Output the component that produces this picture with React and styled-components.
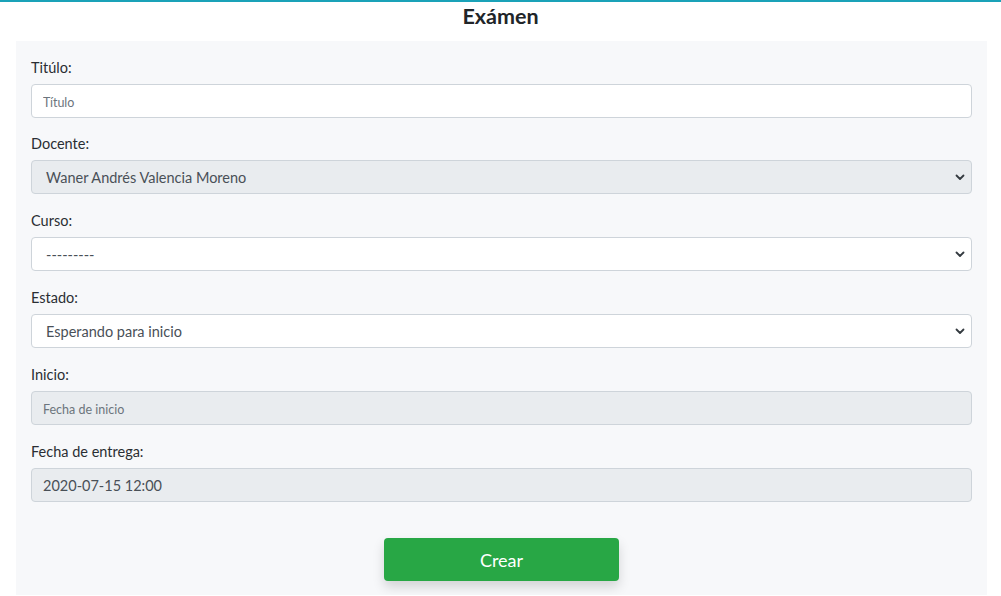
import React from "react";
import styled, { createGlobalStyle } from "styled-components";

const Global = createGlobalStyle`
  html, body { margin: 0; padding: 0; background: #fff; }
  body { font-family: "Segoe UI", Lato, "Open Sans", sans-serif; color: #212529; }
  * { box-sizing: border-box; }
`;

const Page = styled.div`
  border-top: 2px solid #1aa2b8;
  display: flex;
  flex-direction: column;
  align-items: stretch;
`;

const Title = styled.h1`
  margin: 0;
  height: 39px;
  font-size: 21.5px;
  font-weight: 700;
  line-height: 28px;
  text-align: center;
  color: #212529;
`;

const Panel = styled.form`
  margin: 0 14px 0 16px;
  background: #f7f8fa;
  padding: 16px 15px 14px 15px;
  display: flex;
  flex-direction: column;
`;

const Group = styled.div`
  display: flex;
  flex-direction: column;
  margin-bottom: ${(p) => (p.$first ? "15px" : "16px")};
`;

const Label = styled.label`
  font-size: 14.5px;
  line-height: 21px;
  margin-bottom: 6px;
  color: #2a2e33;
`;

const Input = styled.input`
  height: 34px;
  width: 100%;
  border: 1px solid #ced4da;
  border-radius: 4px;
  background: ${(p) => (p.readOnly ? "#e9ecef" : "#fff")};
  padding: 0 11px;
  font-family: inherit;
  font-size: 14.5px;
  color: #495057;
  outline: none;
  &::placeholder {
    font-size: 12.5px;
    color: #6c757d;
  }
`;

const SelectWrap = styled.div`
  position: relative;
  height: 34px;
  border: 1px solid #ced4da;
  border-radius: 4px;
  background: ${(p) => (p.$disabled ? "#e9ecef" : "#fff")};
  display: flex;
  align-items: center;
  padding: 0 14px;
  font-size: 14.5px;
  color: #495057;
`;

const Chevron = styled.svg`
  position: absolute;
  right: 6px;
  top: 50%;
  transform: translateY(-50%);
`;

const ButtonRow = styled.div`
  display: flex;
  justify-content: center;
  margin-top: 20px;
`;

const Button = styled.button`
  width: 235px;
  height: 43px;
  border: none;
  border-radius: 4px;
  background: #28a745;
  color: #fff;
  font-family: inherit;
  font-size: 18px;
  box-shadow: 0 6px 12px rgba(0, 0, 0, 0.15);
  cursor: pointer;
`;

const Select = ({ value, disabled }) => (
  <SelectWrap $disabled={disabled}>
    {value}
    <Chevron width="10" height="8" viewBox="0 0 10 8">
      <path d="M1.5 2.5l3.5 3.5 3.5-3.5" fill="none" stroke="#343a40" strokeWidth="1.8" strokeLinecap="round" strokeLinejoin="round" />
    </Chevron>
  </SelectWrap>
);

export default function App() {
  return (
    <Page>
      <Global />
      <Title>Exámen</Title>
      <Panel onSubmit={(e) => e.preventDefault()}>
        <Group $first>
          <Label>Titúlo:</Label>
          <Input placeholder="Título" />
        </Group>
        <Group>
          <Label>Docente:</Label>
          <Select value="Waner Andrés Valencia Moreno" disabled />
        </Group>
        <Group>
          <Label>Curso:</Label>
          <Select value="---------" />
        </Group>
        <Group>
          <Label>Estado:</Label>
          <Select value="Esperando para inicio" />
        </Group>
        <Group>
          <Label>Inicio:</Label>
          <Input placeholder="Fecha de inicio" readOnly />
        </Group>
        <Group>
          <Label>Fecha de entrega:</Label>
          <Input defaultValue="2020-07-15 12:00" readOnly />
        </Group>
        <ButtonRow>
          <Button type="submit">Crear</Button>
        </ButtonRow>
      </Panel>
    </Page>
  );
}
